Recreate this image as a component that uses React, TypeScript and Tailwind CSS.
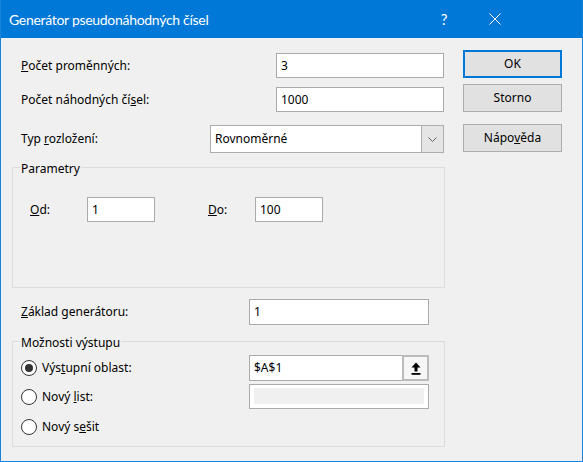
import React from 'react';

// Vstupní pole ve stylu Windows
function TextBox({ value, className = '' }: { value: string; className?: string }) {
  return (
    <div className={`h-full border border-[#ababab] bg-white flex items-center pl-[4px] ${className}`}>
      {value}
    </div>
  );
}

function Radio({ checked }: { checked?: boolean }) {
  return (
    <div className="w-[16px] h-[16px] shrink-0 rounded-full border border-[#333333] bg-white flex items-center justify-center">
      {checked && <div className="w-[8px] h-[8px] rounded-full bg-[#333333]" />}
    </div>
  );
}

function Btn({ children, primary }: { children: React.ReactNode; primary?: boolean }) {
  return (
    <div
      className={`h-[28px] flex items-center justify-center bg-[#e1e1e1] ${
        primary ? 'border-2 border-[#0078d7]' : 'border border-[#adadad]'
      }`}
    >
      {children}
    </div>
  );
}

export default function App() {
  return (
    <div className="w-[583px] h-[462px] flex flex-col bg-[#f0f0f0] border-x border-b border-[#1883d7] font-['Noto_Sans',sans-serif] text-[12px] text-black">
      {/* titulek okna */}
      <div className="h-[38px] shrink-0 bg-[#0078d7] text-white flex items-center">
        <span className="ml-[8px] text-[14px] tracking-[-0.3px] font-['Lato',sans-serif]">Generátor pseudonáhodných čísel</span>
        <div className="ml-auto flex items-center mr-[64px]">
          <span className="w-[46px] mr-[5px] text-center text-[15px] font-['Lato',sans-serif]">?</span>
          <div className="w-[46px] flex justify-center">
            <svg width="12" height="12" viewBox="0 0 12 12">
              <path d="M0.5 0.5 L11.5 11.5 M11.5 0.5 L0.5 11.5" stroke="white" strokeWidth="1" />
            </svg>
          </div>
        </div>
      </div>

      <div className="flex">
        {/* levá část */}
        <div className="w-[433px] ml-[11px] flex flex-col">
          <div className="mt-[15px] h-[25px] flex items-center">
            <span className="pl-[9px]">
              <span className="underline">P</span>očet proměnných:
            </span>
            <TextBox value="3" className="ml-auto mr-[1px] w-[168px]" />
          </div>
          <div className="mt-[9px] h-[25px] flex items-center">
            <span className="pl-[9px]">
              Počet náhodných čí<span className="underline">s</span>el:
            </span>
            <TextBox value="1000" className="ml-auto mr-[1px] w-[168px]" />
          </div>
          <div className="mt-[13px] h-[28px] flex items-center">
            <span className="pl-[9px]">
              Typ <span className="underline">r</span>ozložení:
            </span>
            <div className="ml-auto mr-[1px] w-[234px] h-full flex border border-[#adadad] bg-white">
              <span className="flex-1 flex items-center pl-[4px]">Rovnoměrné</span>
              <div className="w-[22px] h-full bg-[#e5e5e5] border-l border-[#adadad] flex items-center justify-center">
                <svg width="9" height="5" viewBox="0 0 9 5">
                  <polyline points="0.5,0.5 4.5,4.5 8.5,0.5" fill="none" stroke="#606060" strokeWidth="1" />
                </svg>
              </div>
            </div>
          </div>

          <fieldset className="mt-[4px] border border-[#dcdcdc] p-0 m-0 min-w-0">
            <legend className="ml-[7px] px-[1px] pt-[4px] leading-[16px]">Parametry</legend>
            <div className="mt-[20px] mb-[65px] h-[25px] flex items-center">
              <span className="ml-[17px] w-[57px]">
                <span className="underline">O</span>d:
              </span>
              <TextBox value="1" className="w-[68px]" />
              <span className="ml-[53px] w-[47px]">
                <span className="underline">D</span>o:
              </span>
              <TextBox value="100" className="w-[68px]" />
            </div>
          </fieldset>

          <div className="mt-[11px] h-[26px] flex items-center">
            <span className="pl-[9px]">
              <span className="underline">Z</span>áklad generátoru:
            </span>
            <TextBox value="1" className="ml-auto mr-[16px] w-[180px]" />
          </div>

          <fieldset className="mt-[6px] border border-[#dcdcdc] p-0 m-0 min-w-0">
            <legend className="ml-[7px] px-[1px] pt-[4px] leading-[16px]">Možnosti výstupu</legend>
            <div className="mt-[4px] h-[26px] flex items-center">
              <div className="ml-[8px]">
                <Radio checked />
              </div>
              <span className="ml-[5px]">
                Výs<span className="underline">t</span>upní oblast:
              </span>
              <div className="ml-auto mr-[15px] w-[180px] h-full flex">
                <div className="flex-1 border-y border-l border-[#ababab] bg-white flex items-center pl-[4px]">
                  $A$1
                </div>
                <div className="w-[27px] h-full border-2 border-[#bcbcbc] bg-[#f7f7f7] flex items-center justify-center">
                  <svg width="10" height="13" viewBox="0 0 10 13">
                    <path d="M5 0.5 L9.5 5.5 L6.5 5.5 L6.5 9.5 L3.5 9.5 L3.5 5.5 L0.5 5.5 Z" fill="black" />
                    <rect x="0.5" y="11" width="9" height="1.8" fill="black" />
                  </svg>
                </div>
              </div>
            </div>
            <div className="mt-[3px] h-[25px] flex items-center">
              <div className="ml-[8px]">
                <Radio />
              </div>
              <span className="ml-[5px]">
                Nový <span className="underline">l</span>ist:
              </span>
              <div className="ml-auto mr-[15px] w-[180px] h-full border border-[#ababab] bg-white pt-[3px] pb-[4px] px-[4px]">
                <div className="w-full h-full bg-[#f0f0f0]" />
              </div>
            </div>
            <div className="mt-[5px] mb-[6px] h-[26px] flex items-center">
              <div className="ml-[8px]">
                <Radio />
              </div>
              <span className="ml-[5px]">
                Nový s<span className="underline">e</span>šit
              </span>
            </div>
          </fieldset>
        </div>

        {/* tlačítka vpravo */}
        <div className="w-[99px] ml-[18px] flex flex-col">
          <div className="mt-[12px]">
            <Btn primary>OK</Btn>
          </div>
          <div className="mt-[6px]">
            <Btn>Storno</Btn>
          </div>
          <div className="mt-[12px]">
            <Btn>
              <span>
                Nápo<span className="underline">v</span>ěda
              </span>
            </Btn>
          </div>
        </div>
      </div>
    </div>
  );
}
